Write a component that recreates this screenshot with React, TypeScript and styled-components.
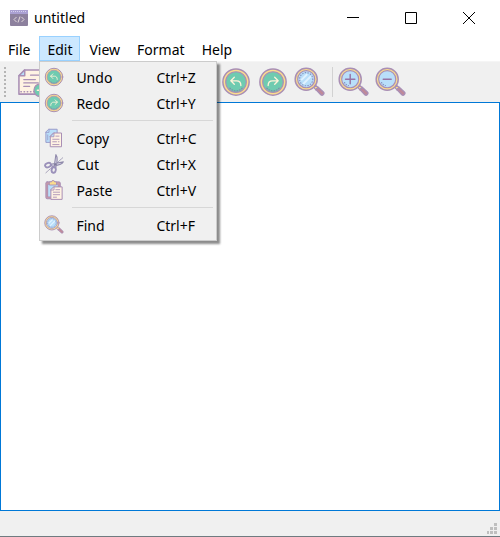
import React from "react";
import styled, { createGlobalStyle, css } from "styled-components";

const GlobalStyle = createGlobalStyle`
  *, *::before, *::after { box-sizing: border-box; }
  body {
    margin: 0;
    background: #fff;
    color: #000;
    font-family: "Segoe UI", "Noto Sans", sans-serif;
    font-size: 14px;
    line-height: 20px;
  }
  button { font: inherit; color: inherit; padding: 0; border: 0; background: transparent; }
`;

const Window = styled.div`
  display: flex;
  flex-direction: column;
  min-height: 100vh;
  border-bottom: 1px solid #6f7b80;
`;

const TitleBar = styled.header`
  display: flex;
  align-items: center;
  height: 36px;
  padding: 0 2px 0 10px;
`;

const Title = styled.h1`
  flex: 1;
  margin: 0 0 0 6px;
  font-size: 14px;
  font-weight: 400;
`;

const CaptionButton = styled.button`
  display: grid;
  place-items: center;
  width: 58px;
  height: 34px;
`;

const MenuBar = styled.nav`
  display: flex;
  gap: 1px;
  height: 25px;
`;

const MenuSlot = styled.div`
  position: relative;
`;

const MenuButton = styled.button<{ $open?: boolean }>`
  height: 25px;
  padding: 2px 7px 0;
  border: 1px solid transparent;
  line-height: 21px;
  ${({ $open }) => $open && css`
    background: #cce8ff;
    border-color: #99d1ff;
  `}
`;

const Menu = styled.div`
  position: absolute;
  z-index: 2;
  top: 100%;
  left: 0;
  width: 178px;
  padding: 2px;
  background: #f0f0f0;
  border: 1px solid #ccc;
  box-shadow: 3px 3px 2px rgba(0, 0, 0, 0.45);
`;

const MenuItem = styled.button`
  display: grid;
  grid-template-columns: 32px 80px 1fr;
  align-items: center;
  width: 100%;
  height: 26px;
  padding-left: 2px;
  text-align: left;
`;

const MenuText = styled.span`
  padding-top: 2px;
`;

const MenuRule = styled.hr`
  height: 1px;
  margin: 4px 1px 4px 30px;
  border: 0;
  background: #d7d7d7;
`;

const ToolBar = styled.div`
  display: flex;
  align-items: center;
  height: 41px;
  padding: 0 4px;
  border-top: 1px solid #f5f5f5;
  background: #f0f0f0;
`;

const Grip = styled.div`
  width: 3px;
  height: 30px;
  margin-right: 7px;
  background: radial-gradient(circle at 1px 1px, #b5b5b5 1px, transparent 1px) 0 0 / 3px 4px;
`;

const ToolGroup = styled.div<{ $wide?: boolean }>`
  display: flex;
  min-width: ${({ $wide }) => ($wide ? "203px" : "0")};
`;

const ToolButton = styled.button`
  display: grid;
  place-items: center;
  width: 37px;
  height: 37px;
`;

const ToolRule = styled.div`
  width: 1px;
  height: 30px;
  margin: 0 2px 0 4px;
  background: #d2d2d2;
`;

const Editor = styled.textarea`
  display: block;
  flex: 1;
  width: 100%;
  padding: 4px;
  border: 1px solid #0078d7;
  outline: 0;
  resize: none;
  background: #fff;
  font: inherit;
`;

const StatusBar = styled.footer`
  display: flex;
  justify-content: flex-end;
  align-items: flex-end;
  height: 25px;
  padding: 2px 3px;
  background: #f0f0f0;
`;

const purple = "#a98fb5";
const gold = "#fbdc8d";

type IconProps = { size: number };

function Svg({ size, children }: IconProps & { children: React.ReactNode }) {
  return (
    <svg width={size} height={size} viewBox="0 0 32 32" fill="none" strokeLinecap="round" strokeLinejoin="round" aria-hidden="true">
      {children}
    </svg>
  );
}

function ArrowIcon({ size, forward }: IconProps & { forward?: boolean }) {
  return (
    <Svg size={size}>
      <circle cx="16" cy="16" r="14" fill={gold} stroke={purple} strokeWidth="1.6" />
      <circle cx="16" cy="16" r="11" fill="#6fcbb0" stroke={purple} strokeWidth="1.2" />
      <g transform={forward ? "translate(32 0) scale(-1 1)" : undefined} stroke="#fff3d9" strokeWidth="1.4">
        <path d="M14.2 11 10.5 14.7l3.7 3.7M10.8 14.7h5.7c3.2 0 4.7 1.7 4.7 5.1" />
      </g>
      <path d="M9.5 22.5c4 4 9 4 13 0" stroke="#7c8fa9" strokeWidth="1.4" strokeDasharray="0.6 2.2" />
    </Svg>
  );
}

function LensIcon({ size, sign }: IconProps & { sign?: "plus" | "minus" }) {
  return (
    <Svg size={size}>
      <path d="m20.5 21 2-2 2.8 2.3-2.5 2.5z" fill={gold} stroke={purple} strokeWidth="1.2" />
      <path d="m22.6 23.3 2.4-2.4 5.3 5c1.7 1.7-.9 4.3-2.6 2.7z" fill="#c18998" stroke={purple} strokeWidth="1.4" />
      <circle cx="12.6" cy="12.6" r="11.4" fill={gold} stroke={purple} strokeWidth="1.5" />
      <circle cx="12.6" cy="12.6" r="8.8" fill="#b9dffa" stroke={purple} strokeWidth="1.2" />
      {!sign && (
        <>
          <path d="m8 13 5-5M10 17l7-7" stroke="#e0f2ff" strokeWidth="2" />
          <circle cx="12.6" cy="12.6" r="6.8" stroke="#8690bf" strokeWidth="1.2" strokeDasharray="0.5 2.3" />
        </>
      )}
      {sign && (
        <>
          <path d={sign === "plus" ? "M7.8 12.6h9.6M12.6 7.8v9.6" : "M8.5 12.6h8.2"} stroke="#9674a6" strokeWidth="1.5" />
          <path d="M6.8 16.1c1 1.7 2.3 2.7 4 3" stroke="#8690bf" strokeWidth="1.2" strokeDasharray="0.5 2" />
        </>
      )}
    </Svg>
  );
}

function NewIcon({ size }: IconProps) {
  return (
    <Svg size={size}>
      <path d="M8 3h21v25H2V9z" fill="#fff3e3" stroke={purple} strokeWidth="1.6" />
      <path d="M8 3v6H2z" fill="#b9dffa" stroke={purple} strokeWidth="1.5" />
      <path d="M14 8.5h10M7 13h12M7 16.5h15M7 20h6" stroke={purple} strokeWidth="1.3" />
      <path d="M4 25.5h14" stroke={purple} strokeWidth="1.5" strokeDasharray="0.5 2.8" />
      <circle cx="24" cy="24" r="6.5" fill="#6fcbb0" stroke={purple} strokeWidth="1.3" />
      <path d="M24 21v6M21 24h6" stroke="#fff3d9" strokeWidth="1.5" />
    </Svg>
  );
}

function CopyIcon({ size }: IconProps) {
  return (
    <Svg size={size}>
      <path d="M8 2h13v21H3V7z" fill="#b9dffa" stroke="#9a9ccb" strokeWidth="1.6" />
      <path d="M8 2v5H3M6 11v8" stroke="#9a9ccb" strokeWidth="1.4" />
      <path d="M16 8h12v22H10V14z" fill="#fff3e3" stroke={purple} strokeWidth="1.6" />
      <path d="M16 8v6h-6z" fill="#b9dffa" stroke={purple} strokeWidth="1.3" />
      <path d="M19 13h5M14 18h10M14 22h6M23 22h1M14 26.5h10" stroke={purple} strokeWidth="1.4" />
    </Svg>
  );
}

function CutIcon({ size }: IconProps) {
  return (
    <Svg size={size}>
      <path d="M3 30 30 6" stroke="#8c86a5" strokeWidth="1.2" strokeDasharray="2 1.4" />
      <path d="m11 16.5 20-4c-2 4.500-7 6-18 7zM16 22l3-21c3 4 3 10-.3 21z" fill="#d5d1e2" stroke="#908aab" strokeWidth="1.7" />
      <ellipse cx="6.4" cy="17.8" rx="4.800" ry="3.400" transform="rotate(-18 6.4 17.8)" stroke="#9b91ba" strokeWidth="3" />
      <ellipse cx="15.5" cy="25.5" rx="3.300" ry="4.600" transform="rotate(12 15.5 25.5)" stroke="#9b91ba" strokeWidth="3" />
      <circle cx="18" cy="16.5" r="1.4" fill="#7d7899" />
    </Svg>
  );
}

function PasteIcon({ size }: IconProps) {
  return (
    <Svg size={size}>
      <rect x="3" y="3" width="23" height="27" rx="2" fill="#c99aa8" stroke={purple} strokeWidth="1.6" />
      <path d="M6.500 7h16v20h-16z" fill="#b9dffa" stroke={purple} strokeWidth="1.2" />
      <path d="M9 3h3c0-3 5-3 5 0h3v5H9z" fill={gold} stroke={purple} strokeWidth="1.4" />
      <path d="M16 11h13v20H11V16z" fill="#fff3e3" stroke={purple} strokeWidth="1.6" />
      <path d="M16 11v5h-5M19 15.5h6M15 19.5h10M15 23.5h10M15 27.5h5" stroke={purple} strokeWidth="1.4" />
    </Svg>
  );
}

function AppIcon() {
  return (
    <svg width="18" height="16" viewBox="0 0 18 16" fill="none" aria-hidden="true">
      <rect width="18" height="16" rx="1" fill="#8d819e" />
      <path d="M0 0h18v4H0z" fill="#aaa0d2" />
      <path d="M1 1.5h16" stroke="#d7d1f0" strokeDasharray="1 1" />
      <path d="m6.5 7-2.5 2.5L6.5 12M11.5 7 14 9.5 11.5 12M10 6.5l-2 6" stroke="#e3d9dc" />
    </svg>
  );
}

function SizeGrip() {
  return (
    <svg width="10" height="11" viewBox="0 0 10 11" fill="#bfbfbf" aria-hidden="true">
      <path d="M7 0h3v3H7zM7 4h3v3H7zM3 4h3v3H3zM7 8h3v3H7zM3 8h3v3H3zM0 8h2v3H0z" />
    </svg>
  );
}

type Command = { label: string; keys: string; icon: React.ReactNode };

const editGroups: Command[][] = [
  [
    { label: "Undo", keys: "Ctrl+Z", icon: <ArrowIcon size={20} /> },
    { label: "Redo", keys: "Ctrl+Y", icon: <ArrowIcon size={20} forward /> },
  ],
  [
    { label: "Copy", keys: "Ctrl+C", icon: <CopyIcon size={20} /> },
    { label: "Cut", keys: "Ctrl+X", icon: <CutIcon size={20} /> },
    { label: "Paste", keys: "Ctrl+V", icon: <PasteIcon size={20} /> },
  ],
  [{ label: "Find", keys: "Ctrl+F", icon: <LensIcon size={20} /> }],
];

function EditMenu() {
  return (
    <Menu role="menu" aria-label="Edit">
      {editGroups.map((group, index) => (
        <React.Fragment key={group[0].label}>
          {index > 0 && <MenuRule />}
          {group.map(({ label, keys, icon }) => (
            <MenuItem key={label} role="menuitem">
              {icon}
              <MenuText>{label}</MenuText>
              <MenuText>{keys}</MenuText>
            </MenuItem>
          ))}
        </React.Fragment>
      ))}
    </Menu>
  );
}

export default function App() {
  return (
    <>
      <GlobalStyle />
      <Window>
        <TitleBar>
          <AppIcon />
          <Title>untitled</Title>
          <CaptionButton aria-label="Minimize">
            <svg width="12" height="12" stroke="#000"><path d="M0 5.5h12" /></svg>
          </CaptionButton>
          <CaptionButton aria-label="Maximize">
            <svg width="12" height="12" stroke="#000" fill="none"><path d="M.5.5h11v11H.5z" /></svg>
          </CaptionButton>
          <CaptionButton aria-label="Close">
            <svg width="12" height="12" stroke="#000"><path d="m0 0 12 12M12 0 0 12" /></svg>
          </CaptionButton>
        </TitleBar>
        <MenuBar>
          {["File", "Edit", "View", "Format", "Help"].map((name) => (
            <MenuSlot key={name}>
              <MenuButton $open={name === "Edit"} aria-haspopup="menu" aria-expanded={name === "Edit"}>
                {name}
              </MenuButton>
              {name === "Edit" && <EditMenu />}
            </MenuSlot>
          ))}
        </MenuBar>
        <ToolBar role="toolbar">
          <Grip />
          <ToolGroup $wide>
            <ToolButton aria-label="New"><NewIcon size={31} /></ToolButton>
          </ToolGroup>
          <ToolGroup>
            <ToolButton aria-label="Undo"><ArrowIcon size={30} /></ToolButton>
            <ToolButton aria-label="Redo"><ArrowIcon size={30} forward /></ToolButton>
            <ToolButton aria-label="Find"><LensIcon size={31} /></ToolButton>
          </ToolGroup>
          <ToolRule />
          <ToolGroup>
            <ToolButton aria-label="Zoom in"><LensIcon size={31} sign="plus" /></ToolButton>
            <ToolButton aria-label="Zoom out"><LensIcon size={31} sign="minus" /></ToolButton>
          </ToolGroup>
        </ToolBar>
        <Editor aria-label="Document" spellCheck={false} />
        <StatusBar><SizeGrip /></StatusBar>
      </Window>
    </>
  );
}
